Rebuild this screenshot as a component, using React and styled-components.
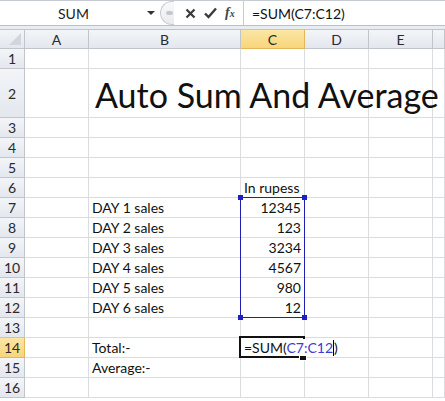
import React from 'react';
import styled, { createGlobalStyle } from 'styled-components';

const Global = createGlobalStyle`
  body { margin:0; background:#fff; font-family: Lato, "Open Sans", sans-serif; }
`

const Page = styled.div`
  width:445px;
  height:401px;
  overflow:hidden;
  background:#fff;
`

const FormulaBar = styled.div`
  display:flex;
  height:24px;
  border-top:1px solid #c6cbd3;
  border-bottom:1px solid #b9c0ca;
  background:#fff;
`
const NameBox = styled.div`
  width:160px;
  flex-shrink:0;
  display:flex;
  align-items:center;
  position:relative;
  font-size:14px;
  color:#222;
  padding-left:58px;
  box-sizing:border-box;
`
const Arrow = styled.span`
  position:absolute;
  right:5px;
  top:10px;
  border-left:4px solid transparent;
  border-right:4px solid transparent;
  border-top:4px solid #333;
`
const Tools = styled.div`
  width:84px;
  display:flex;
  align-items:center;
  gap:8px;
  border-right:1px solid #c9ced6;
  box-sizing:border-box;
  flex-shrink:0;
`
const Knob = styled.div`
  width:13px;
  height:22px;
  flex-shrink:0;
  border:1px solid #c8ccd2;
  border-right:none;
  border-radius:12px 0 0 12px;
  background:linear-gradient(#fafafa,#e8eaee);
  display:flex;
  align-items:center;
  justify-content:center;
  margin-right:3px;
  &::after{content:'';width:7px;height:4px;border-radius:3px;background:#c4c8ce;margin-left:3px;}
`
const Fx = styled.span`
  font-family:"Liberation Serif", serif;
  font-style:italic;
  font-weight:bold;
  font-size:14px;
  color:#444;
`
const FormulaText = styled.div`
  flex:1;
  display:flex;
  align-items:center;
  padding-left:8px;
  font-size:14px;
  color:#111;
`
const Gap = styled.div`
  height:3px;
  background:#e9edf2;
`

const Sheet = styled.div`
  display:grid;
  grid-template-columns:25px 64px 152px 64px 64px 64px 12px;
  grid-template-rows:20px 20px 49px repeat(14, 20px);
`

const Head = styled.div`
  background:${p => p.$active ? 'linear-gradient(#fbe6a4,#f8d57a)' : 'linear-gradient(#f3f5f8,#e3e7ee)'};
  border-right:1px solid ${p => p.$active ? '#e3b759' : '#c0c5cc'};
  border-bottom:1px solid ${p => p.$active ? '#e3b759' : '#c0c5cc'};
  border-top:${p => p.$top ? '1px solid #c0c5cc' : 'none'};
  box-sizing:border-box;
  display:flex;
  align-items:center;
  justify-content:center;
  font-size:14px;
  color:#2a2a2a;
  position:relative;
`
const Corner = styled(Head)`
  &::after{
    content:'';
    position:absolute;
    right:3px; bottom:3px;
    border-left:12px solid transparent;
    border-bottom:12px solid #d2d6dc;
  }
`

const Cell = styled.div`
  border-right:1px solid #dadcdd;
  border-bottom:1px solid #dadcdd;
  box-sizing:border-box;
  display:flex;
  align-items:flex-end;
  justify-content:${p => p.$right ? 'flex-end' : 'flex-start'};
  padding:0 3px 1px 3px;
  font-size:14px;
  color:#111;
  white-space:nowrap;
  position:relative;
  overflow:visible;
  z-index:${p => p.$z || 0};
`
const Title = styled.span`
  font-size:34px;
  line-height:1;
  margin-bottom:4px;
  margin-left:3px;
  position:relative;
  z-index:1;
`

const Selection = styled.div`
  position:absolute;
  left:-1px; right:-1px;
  top:-1px;
  bottom:-1px;
  border-left:1px solid #2020b0;
  border-right:1px solid #2020b0;
  border-top:${p => p.$first ? '1px solid #2020b0' : 'none'};
  border-bottom:${p => p.$last ? '1px solid #2020b0' : 'none'};
  pointer-events:none;
`
const Dot = styled.span`
  position:absolute;
  width:5px; height:5px;
  background:#2020c0;
  ${p => p.$top ? 'top:-3px;' : 'bottom:-3px;'}
  ${p => p.$left ? 'left:-3px;' : 'right:-3px;'}
`

const Active = styled.div`
  position:absolute;
  left:-2px; top:-2px; right:-1px; bottom:-1px;
  border:2px solid #111;
  pointer-events:none;
  &::after{
    content:'';
    position:absolute;
    right:-4px; bottom:-5px;
    width:6px; height:6px;
    background:#111;
    border:1px solid #fff;
  }
`
const Editing = styled.span`
  position:relative;
  z-index:2;
  background:#fff;
  padding-right:2px;
`
const Blue = styled.span`
  color:#3b3bd0;
`
const Caret = styled.span`
  display:inline-block;
  width:1px;
  height:16px;
  background:#000;
  vertical-align:-3px;
`

const cols = ['A', 'B', 'C', 'D', 'E', '']
const sales = [12345, 123, 3234, 4567, 980, 12]

const rowContent = (r) => {
  const b = r >= 7 && r <= 12 ? `DAY ${r - 6} sales` : r === 14 ? 'Total:-' : r === 15 ? 'Average:-' : ''
  let c = null
  if (r === 6) c = 'In rupess'
  if (r >= 7 && r <= 12) c = sales[r - 7]
  return { b, c }
}

const App = () => {
  const rows = Array.from({ length: 16 }, (_, i) => i + 1)
  return (
    <Page>
      <Global />
      <FormulaBar>
        <NameBox>SUM<Arrow /></NameBox>
        <Tools>
          <Knob />
          <svg width="11" height="11" viewBox="0 0 11 11"><path d="M1.5 1.5L9.5 9.5M9.5 1.5L1.5 9.5" stroke="#3a3a3a" strokeWidth="2.2" /></svg>
          <svg width="13" height="12" viewBox="0 0 13 12"><path d="M1 6.5L4.5 10L12 1.5" stroke="#3a3a3a" strokeWidth="2.4" fill="none" /></svg>
          <Fx>f<span style={{ fontSize: 10 }}>x</span></Fx>
        </Tools>
        <FormulaText>=SUM(C7:C12)</FormulaText>
      </FormulaBar>
      <Gap />
      <Sheet>
        <Corner $top />
        {cols.map((c, i) => <Head key={i} $top $active={c === 'C'}>{c}</Head>)}
        {rows.map(r => {
          const { b, c } = rowContent(r)
          return (
            <React.Fragment key={r}>
              <Head $active={r === 14}>{r}</Head>
              <Cell />
              <Cell $z={r === 2 ? 2 : 0}>{r === 2 ? <Title>Auto Sum And Average</Title> : b}</Cell>
              <Cell $right={r !== 6 && r !== 14} $z={r === 14 ? 3 : (r >= 7 && r <= 12 ? 2 : 0)}>
                {r === 14 ? <Editing>=SUM(<Blue>C7:C12</Blue><Caret />)</Editing> : c}
                {r >= 7 && r <= 12 && (
                  <Selection $first={r === 7} $last={r === 12}>
                    {r === 7 && <><Dot $top $left /><Dot $top /></>}
                    {r === 12 && <><Dot $left /><Dot /></>}
                  </Selection>
                )}
                {r === 14 && <Active />}
              </Cell>
              <Cell />
              <Cell />
              <Cell />
            </React.Fragment>
          )
        })}
      </Sheet>
    </Page>
  )
}

export default App
